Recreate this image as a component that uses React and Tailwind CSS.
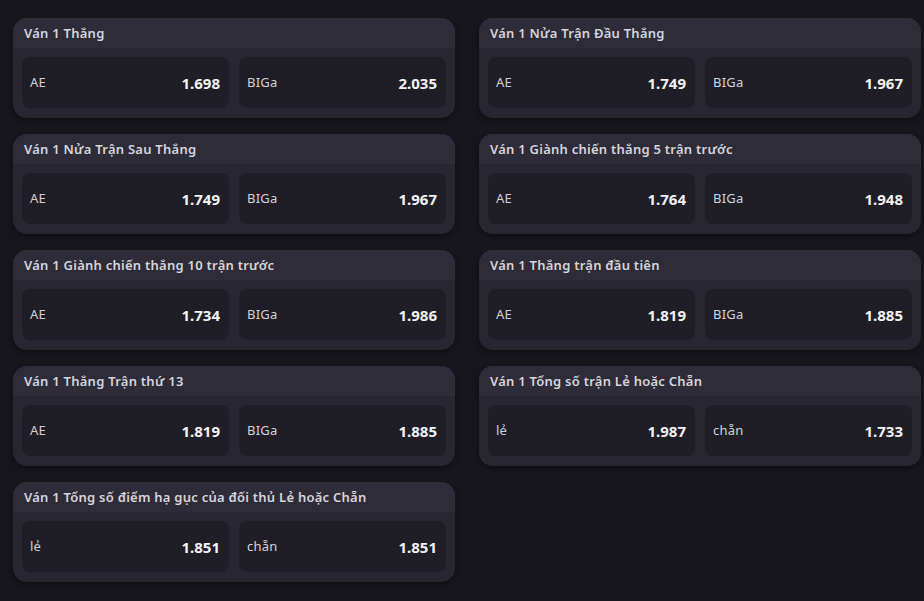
import React from "react";

const markets = [
  { title: "Ván 1 Thắng", opts: [["AE", "1.698"], ["BIGa", "2.035"]] },
  { title: "Ván 1 Nửa Trận Đầu Thắng", opts: [["AE", "1.749"], ["BIGa", "1.967"]] },
  { title: "Ván 1 Nửa Trận Sau Thắng", opts: [["AE", "1.749"], ["BIGa", "1.967"]] },
  { title: "Ván 1 Giành chiến thắng 5 trận trước", opts: [["AE", "1.764"], ["BIGa", "1.948"]] },
  { title: "Ván 1 Giành chiến thắng 10 trận trước", opts: [["AE", "1.734"], ["BIGa", "1.986"]] },
  { title: "Ván 1 Thắng trận đầu tiên", opts: [["AE", "1.819"], ["BIGa", "1.885"]] },
  { title: "Ván 1 Thắng Trận thứ 13", opts: [["AE", "1.819"], ["BIGa", "1.885"]] },
  { title: "Ván 1 Tổng số trận Lẻ hoặc Chẵn", opts: [["lẻ", "1.987"], ["chẵn", "1.733"]] },
  { title: "Ván 1 Tổng số điểm hạ gục của đối thủ Lẻ hoặc Chẵn", opts: [["lẻ", "1.851"], ["chẵn", "1.851"]] },
];

function Card({ title, opts }) {
  return (
    <div className="rounded-[14px] overflow-hidden bg-[#282731] shadow-[0_2px_6px_rgba(0,0,0,0.45)]">
      <div className="h-[30px] bg-[#2e2c38] flex items-center pl-[11px] pt-[2px] text-[13px] font-semibold text-[#d6d5dc] tracking-[0.25px]">
        {title}
      </div>
      <div className="grid grid-cols-2 gap-[10px] px-[9px] pt-[9px] pb-[10px]">
        {opts.map(([label, val]) => (
          <div
            key={label}
            className="h-[51px] rounded-[8px] bg-[#1f1e26] flex items-center justify-between pl-[8px] pr-[9px] pt-[1px]"
          >
            <span className="text-[13px] text-[#d2d1d8] tracking-[0.2px]">{label}</span>
            <span className="text-[15px] font-bold text-[#f4f4f6]">{val}</span>
          </div>
        ))}
      </div>
    </div>
  );
}

export default function App() {
  return (
    <div
      className="w-[924px] h-[601px] bg-[#18171d] pl-[13px] pt-[18px] overflow-hidden"
      style={{ fontFamily: '"Noto Sans", "Open Sans", sans-serif' }}
    >
      <div className="grid grid-cols-[442px_442px] gap-x-[24px] gap-y-[16px] items-start">
        {markets.map((m) => (
          <Card key={m.title} {...m} />
        ))}
      </div>
    </div>
  );
}
